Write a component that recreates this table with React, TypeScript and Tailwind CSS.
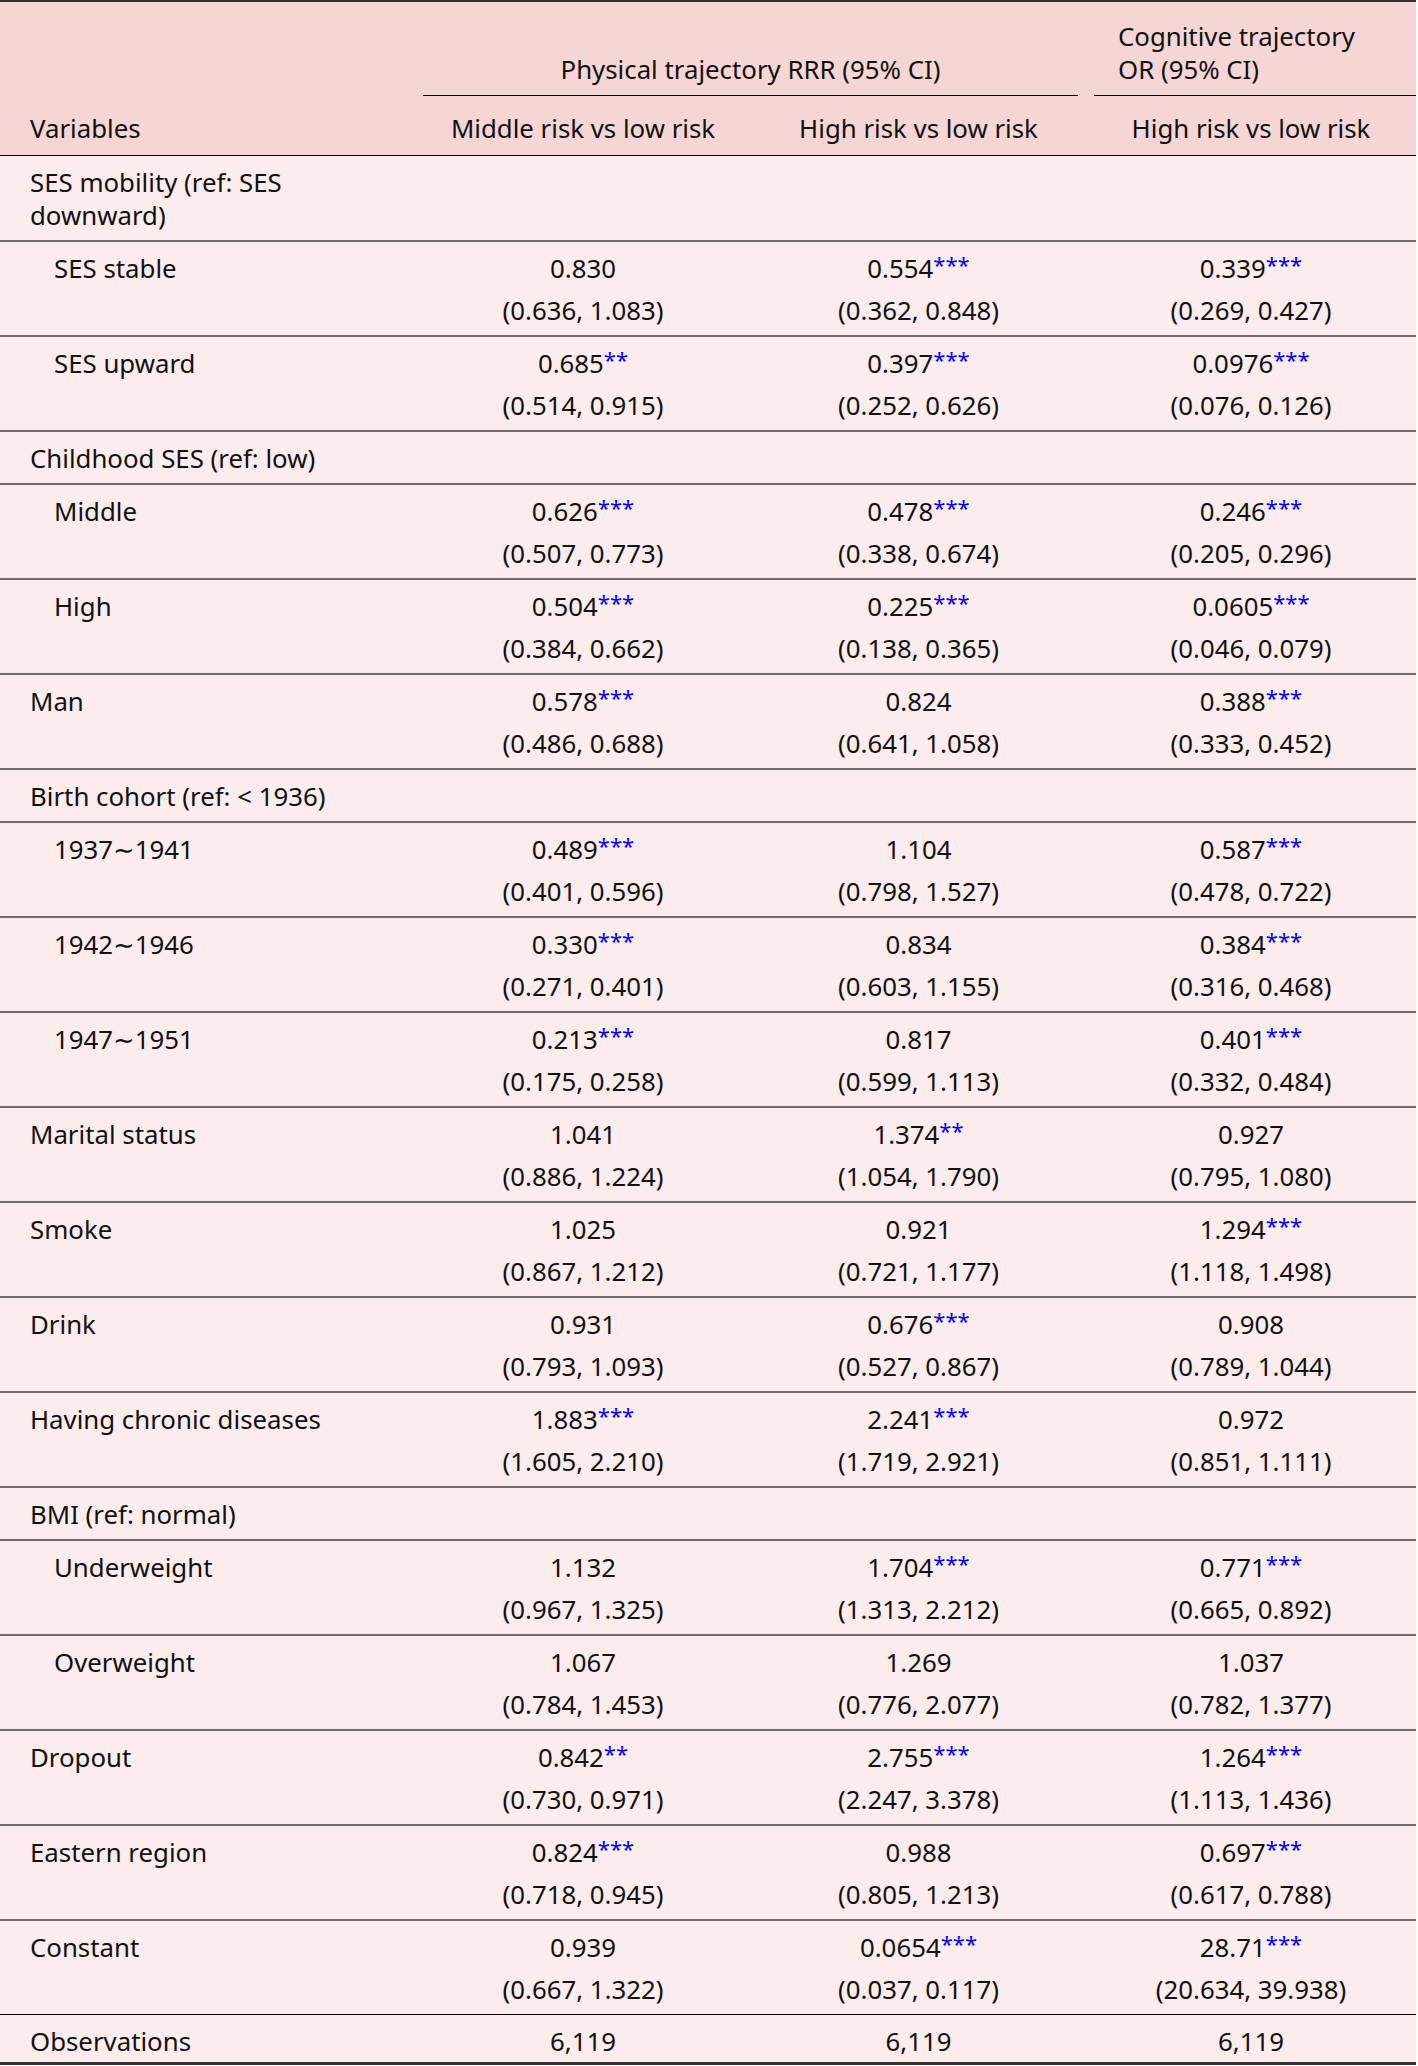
import React from "react";

type Cell = { v: string; s?: string; ci?: string };
type Row = {
  label: string;
  indent?: boolean;
  group?: boolean;
  cells?: Cell[];
  line?: "gray" | "black" | "end";
};

// "0.554***" -> value + stars
const c = (raw: string, ci?: string): Cell => {
  const m = raw.match(/^([^*]+)(\**)$/);
  return { v: m ? m[1] : raw, s: m && m[2] ? m[2] : undefined, ci };
};

const rows: Row[] = [
  { label: "SES mobility (ref: SES downward)", group: true },
  {
    label: "SES stable",
    indent: true,
    cells: [c("0.830", "(0.636, 1.083)"), c("0.554***", "(0.362, 0.848)"), c("0.339***", "(0.269, 0.427)")],
  },
  {
    label: "SES upward",
    indent: true,
    cells: [c("0.685**", "(0.514, 0.915)"), c("0.397***", "(0.252, 0.626)"), c("0.0976***", "(0.076, 0.126)")],
  },
  { label: "Childhood SES (ref: low)", group: true },
  {
    label: "Middle",
    indent: true,
    cells: [c("0.626***", "(0.507, 0.773)"), c("0.478***", "(0.338, 0.674)"), c("0.246***", "(0.205, 0.296)")],
  },
  {
    label: "High",
    indent: true,
    cells: [c("0.504***", "(0.384, 0.662)"), c("0.225***", "(0.138, 0.365)"), c("0.0605***", "(0.046, 0.079)")],
  },
  {
    label: "Man",
    cells: [c("0.578***", "(0.486, 0.688)"), c("0.824", "(0.641, 1.058)"), c("0.388***", "(0.333, 0.452)")],
  },
  { label: "Birth cohort (ref: < 1936)", group: true },
  {
    label: "1937∼1941",
    indent: true,
    cells: [c("0.489***", "(0.401, 0.596)"), c("1.104", "(0.798, 1.527)"), c("0.587***", "(0.478, 0.722)")],
  },
  {
    label: "1942∼1946",
    indent: true,
    cells: [c("0.330***", "(0.271, 0.401)"), c("0.834", "(0.603, 1.155)"), c("0.384***", "(0.316, 0.468)")],
  },
  {
    label: "1947∼1951",
    indent: true,
    cells: [c("0.213***", "(0.175, 0.258)"), c("0.817", "(0.599, 1.113)"), c("0.401***", "(0.332, 0.484)")],
  },
  {
    label: "Marital status",
    cells: [c("1.041", "(0.886, 1.224)"), c("1.374**", "(1.054, 1.790)"), c("0.927", "(0.795, 1.080)")],
  },
  {
    label: "Smoke",
    cells: [c("1.025", "(0.867, 1.212)"), c("0.921", "(0.721, 1.177)"), c("1.294***", "(1.118, 1.498)")],
  },
  {
    label: "Drink",
    cells: [c("0.931", "(0.793, 1.093)"), c("0.676***", "(0.527, 0.867)"), c("0.908", "(0.789, 1.044)")],
  },
  {
    label: "Having chronic diseases",
    cells: [c("1.883***", "(1.605, 2.210)"), c("2.241***", "(1.719, 2.921)"), c("0.972", "(0.851, 1.111)")],
  },
  { label: "BMI (ref: normal)", group: true },
  {
    label: "Underweight",
    indent: true,
    cells: [c("1.132", "(0.967, 1.325)"), c("1.704***", "(1.313, 2.212)"), c("0.771***", "(0.665, 0.892)")],
  },
  {
    label: "Overweight",
    indent: true,
    cells: [c("1.067", "(0.784, 1.453)"), c("1.269", "(0.776, 2.077)"), c("1.037", "(0.782, 1.377)")],
  },
  {
    label: "Dropout",
    cells: [c("0.842**", "(0.730, 0.971)"), c("2.755***", "(2.247, 3.378)"), c("1.264***", "(1.113, 1.436)")],
  },
  {
    label: "Eastern region",
    cells: [c("0.824***", "(0.718, 0.945)"), c("0.988", "(0.805, 1.213)"), c("0.697***", "(0.617, 0.788)")],
  },
  {
    label: "Constant",
    line: "black",
    cells: [c("0.939", "(0.667, 1.322)"), c("0.0654***", "(0.037, 0.117)"), c("28.71***", "(20.634, 39.938)")],
  },
  { label: "Observations", line: "end", cells: [c("6,119"), c("6,119"), c("6,119")] },
];

const cols = "grid grid-cols-[415px_336px_335px_330px]";

function Stars({ s }: { s?: string }) {
  if (!s) return null;
  return <span className="relative top-[-5px] text-[22px] leading-none text-[#0000ff]">{s}</span>;
}

function BodyRow({ row }: { row: Row }) {
  const line =
    row.line === "black"
      ? "border-b border-black"
      : row.line === "end"
      ? "border-b-[3px] border-[#333]"
      : "border-b-2 border-[#726b6b]";
  const pad = row.line === "end" ? "pt-[10px] pb-[4px]" : "pt-[10px] pb-[8px]";
  return (
    <div className={`${cols} ${line}`}>
      <div className={`${pad} ${row.indent ? "pl-[54px]" : "pl-[30px]"} pr-[48px]`}>{row.label}</div>
      {row.cells?.map((cell, i) => (
        <div key={i} className={`${pad} flex flex-col items-center gap-[9px]`}>
          <div className="h-[33px] whitespace-nowrap">
            {cell.v}
            <Stars s={cell.s} />
          </div>
          {cell.ci && <div className="h-[33px] whitespace-nowrap">{cell.ci}</div>}
        </div>
      ))}
    </div>
  );
}

export default function App() {
  return (
    <div className="w-[1416px] bg-[#fcecec] text-[#111] font-['Noto_Sans','DejaVu_Sans',sans-serif] text-[25.8px] leading-[33px]">
      {/* header */}
      <div className={`${cols} grid-rows-[94px_59px] bg-[#f6d6d5] border-t-2 border-[#333] border-b border-b-black`}>
        <div className="row-span-2 flex items-end pl-[30px] pb-[10px]">Variables</div>
        <div className="col-span-2 mx-[8px] flex items-end justify-center pt-[18px] pb-[9px] border-b border-black">
          Physical trajectory RRR (95% CI)
        </div>
        <div className="ml-[8px] pl-[24px] pt-[18px] pb-[9px] border-b border-black">
          Cognitive trajectory
          <br />
          OR (95% CI)
        </div>
        <div className="text-center pt-[16px] pb-[10px]">Middle risk vs low risk</div>
        <div className="text-center pt-[16px] pb-[10px]">High risk vs low risk</div>
        <div className="text-center pt-[16px] pb-[10px]">High risk vs low risk</div>
      </div>
      {rows.map((r, i) => (
        <BodyRow key={i} row={r} />
      ))}
    </div>
  );
}
